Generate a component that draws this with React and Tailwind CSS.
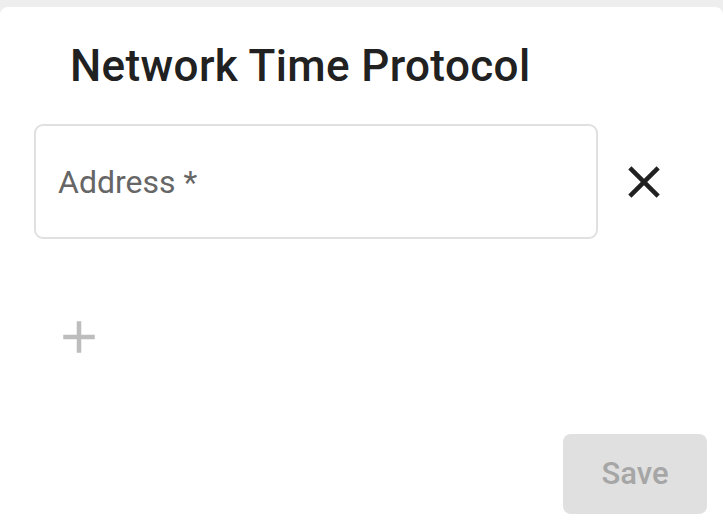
import React from 'react';

// Material "close" and "add" glyphs, drawn inline
const CloseIcon = (props) => (
  <svg {...props} viewBox="0 0 24 24" fill="currentColor" xmlns="http://www.w3.org/2000/svg">
    <path d="M19 6.41L17.59 5 12 10.59 6.41 5 5 6.41 10.59 12 5 17.59 6.41 19 12 13.41 17.59 19 19 17.59 13.41 12z" />
  </svg>
);

const AddIcon = (props) => (
  <svg {...props} viewBox="0 0 24 24" fill="currentColor" xmlns="http://www.w3.org/2000/svg">
    <path d="M19 13h-6v6h-2v-6H5v-2h6V5h2v6h6v2z" />
  </svg>
);

function App() {
  return (
    <div className="min-h-screen bg-[#eeeeee] pt-[7px] font-['Roboto',sans-serif]">
      <div className="flex h-[524px] flex-col rounded-t-lg bg-white">
        {/* Title */}
        <h1 className="pl-[70px] pt-[37px] text-[44px] font-medium leading-[44px] tracking-[0.0085em] text-[#212121]">
          Network Time Protocol
        </h1>

        {/* Address row */}
        <div className="mt-[36px] flex items-center pl-[34px]">
          <div className="flex h-[115px] w-[564px] items-center rounded-[9px] border-2 border-[#e0e0e0] pl-[22px]">
            <span className="text-[32px] leading-none text-[#666666]">Address *</span>
          </div>
          <button className="ml-[19px] flex h-[54px] w-[54px] items-center justify-center text-[#212121]">
            <CloseIcon className="h-[54px] w-[54px]" />
          </button>
        </div>

        {/* Add entry */}
        <div className="mt-[71px] pl-[52px]">
          <button className="flex h-[54px] w-[54px] items-center justify-center text-[#bdbdbd]">
            <AddIcon className="h-[54px] w-[54px]" />
          </button>
        </div>

        {/* Footer */}
        <div className="mt-auto flex justify-end pb-[17px] pr-4">
          <button
            disabled
            className="flex h-[80px] w-[144px] items-center justify-center rounded-lg bg-[#e0e0e0] text-[31px] font-medium text-[#a6a6a6]"
          >
            Save
          </button>
        </div>
      </div>
    </div>
  );
}

export default App;
